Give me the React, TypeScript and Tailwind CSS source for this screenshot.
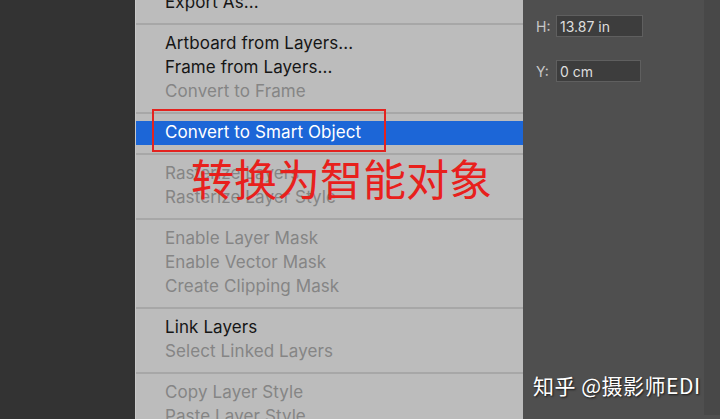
import React from 'react';

type Item = { label: string; disabled?: boolean; active?: boolean } | 'sep';

const ITEMS: Item[] = [
  { label: 'Export As...' },
  'sep',
  { label: 'Artboard from Layers...' },
  { label: 'Frame from Layers...' },
  { label: 'Convert to Frame', disabled: true },
  'sep',
  { label: 'Convert to Smart Object', active: true },
  'sep',
  { label: 'Rasterize Layers', disabled: true },
  { label: 'Rasterize Layer Style', disabled: true },
  'sep',
  { label: 'Enable Layer Mask', disabled: true },
  { label: 'Enable Vector Mask', disabled: true },
  { label: 'Create Clipping Mask', disabled: true },
  'sep',
  { label: 'Link Layers' },
  { label: 'Select Linked Layers', disabled: true },
  'sep',
  { label: 'Copy Layer Style', disabled: true },
  { label: 'Paste Layer Style', disabled: true },
];

const Field: React.FC<{ label: string; value: string; width: string }> = ({ label, value, width }) => (
  <div className="flex items-center gap-[6px]">
    <span className="text-[14px] text-[#c8c8c8] w-[14px]">{label}</span>
    <div className={`h-[22px] ${width} bg-[#3d3d3d] border border-[#5f5f5f] px-[3px] flex items-center text-[14px] text-[#dedede]`}>
      {value}
    </div>
  </div>
);

const App: React.FC = () => {
  return (
    <div
      className="relative w-[720px] h-[419px] overflow-hidden flex bg-[#323232]"
      style={{ fontFamily: 'Inter, "Noto Sans CJK SC", sans-serif' }}
    >
      {/* dark canvas on the left */}
      <div className="w-[135px] shrink-0 bg-[#333333]" />

      {/* context menu */}
      <div className="w-[388px] shrink-0 bg-[#bcbcbc] border-l border-[#c8c8c8]">
        <div className="-mt-[9px] flex flex-col">
          {ITEMS.map((item, i) =>
            item === 'sep' ? (
              <div key={i} className="h-[17px] flex items-center">
                <div className="w-full h-[2px] bg-[#a7a7a7]" />
              </div>
            ) : (
              <div
                key={i}
                className={`h-[24px] flex items-center pl-[29px] text-[17px] tracking-[0.1px] ${
                  item.active
                    ? 'bg-[#1c66d7] text-white'
                    : item.disabled
                    ? 'text-[#858585]'
                    : 'text-[#161616]'
                }`}
              >
                {item.label}
              </div>
            )
          )}
        </div>
      </div>

      {/* properties panel */}
      <div className="flex-1 flex bg-[#4f4f4f]">
        <div className="flex-1 flex flex-col gap-[23px] pt-[15px] pl-[13px]">
          <Field label="H:" value="13.87 in" width="w-[87px]" />
          <Field label="Y:" value="0 cm" width="w-[85px]" />
        </div>
        <div className="w-[16px] h-[415px] bg-[#484848]" />
      </div>

      {/* annotation */}
      <div className="absolute left-[152px] top-[109px] w-[234px] h-[43px] border-2 border-[#e3231f]" />
      <div className="absolute left-[191px] top-[151px] text-[43px] leading-[52px] text-[#e8201c]" style={{ fontFamily: '"Noto Sans CJK SC", sans-serif' }}>
        转换为智能对象
      </div>

      {/* watermark */}
      <div
        className="absolute left-[533px] top-[370px] text-[21px] leading-[30px] tracking-[0.5px] text-white [text-shadow:1px_1px_2px_rgba(0,0,0,0.7)]"
        style={{ fontFamily: '"Noto Sans CJK SC", sans-serif' }}
      >
        知乎 @摄影师EDI
      </div>
    </div>
  );
};

export default App;
